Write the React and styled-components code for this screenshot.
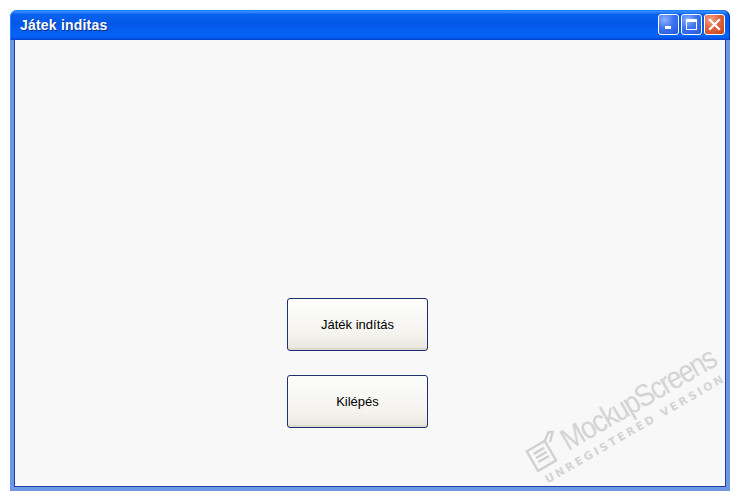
import React from "react";
import styled, { createGlobalStyle } from "styled-components";

const GlobalStyle = createGlobalStyle`
  html, body {
    margin: 0;
    padding: 0;
    background: #ffffff;
  }
  body {
    font-family: Tahoma, "Liberation Sans", sans-serif;
  }
`;

const Page = styled.div`
  width: 740px;
  height: 500px;
  padding: 10px 0 0 10px;
  box-sizing: border-box;
`;

const Window = styled.div`
  width: 720px;
  height: 481px;
  display: flex;
  flex-direction: column;
`;

const TitleBar = styled.div`
  height: 30px;
  flex: none;
  display: flex;
  align-items: center;
  padding: 0 5px 0 10px;
  border-radius: 7px 7px 0 0;
  background: linear-gradient(
    #0a7bff 0%,
    #3a8cff 6%,
    #0861ee 14%,
    #0458e8 45%,
    #0664f5 85%,
    #0557ec 94%,
    #003cc8 100%
  );
  box-shadow: inset 1px 0 0 #2f7cff, inset -1px 0 0 #0033b8;
`;

const Title = styled.div`
  flex: 1;
  color: #ffffff;
  font: bold 14px "Liberation Sans", "DejaVu Sans", sans-serif;
  letter-spacing: 0.2px;
  text-shadow: 1px 1px 0 #0b2f8a;
  margin-top: -1px;
`;

const Controls = styled.div`
  display: flex;
  gap: 2px;
  margin-top: -2px;
`;

const Ctl = styled.div`
  width: 21px;
  height: 21px;
  box-sizing: border-box;
  border: 1px solid #ffffff;
  border-radius: 3px;
  display: flex;
  align-items: center;
  justify-content: center;
  background: ${(p) =>
    p.$close
      ? "radial-gradient(circle at 30% 25%, #f0a288 0%, #e2653f 45%, #c4401c 100%)"
      : "radial-gradient(circle at 30% 25%, #8fb2ff 0%, #3d74f0 45%, #2257d8 100%)"};
`;

const Body = styled.div`
  flex: 1;
  position: relative;
  overflow: hidden;
  display: flex;
  background: #f8f8f8;
  border-style: solid;
  border-color: #6f98e4;
  border-width: 0 4px 4px 4px;
  box-shadow: inset 1px 0 0 #1f3fa6, inset -1px 0 0 #1f3fa6, inset 0 -1px 0 #1f3fa6;
`;

const Menu = styled.div`
  display: flex;
  flex-direction: column;
  gap: 24px;
  padding: 258px 0 0 273px;
`;

const Button = styled.button`
  width: 141px;
  height: 53px;
  border: 1px solid #1e2f72;
  border-radius: 3px;
  background: linear-gradient(#fdfdfb 0%, #f4f3ee 70%, #e8e6dd 100%);
  box-shadow: inset 0 -2px 0 #dcd9cf;
  font: 13px "Liberation Sans", Arial, sans-serif;
  color: #000000;
  padding: 0;
  cursor: pointer;
`;

const Watermark = styled.div`
  position: absolute;
  left: 503px;
  top: 338px;
  width: 218px;
  height: 70px;
  transform: rotate(-30deg);
  transform-origin: center;
  display: grid;
  grid-template-columns: 40px auto;
  align-items: end;
  align-content: center;
  white-space: nowrap;
  pointer-events: none;
`;

const Brand = styled.div`
  font: 27px "Liberation Sans", sans-serif;
  letter-spacing: -1.6px;
  line-height: 28px;
  color: #d4d4d4;
  transform: scaleY(1.15);
  transform-origin: bottom left;
`;

const Unreg = styled.div`
  grid-column: 1 / 3;
  font: bold 11px "DejaVu Sans", "Liberation Sans", sans-serif;
  letter-spacing: 2.6px;
  color: #d4d4d4;
  margin-top: 2px;
  padding-left: 6px;
`;

const MinIcon = () => (
  <svg width="11" height="11" viewBox="0 0 11 11">
    <rect x="2" y="7" width="6" height="3" fill="#ffffff" />
  </svg>
);

const MaxIcon = () => (
  <svg width="13" height="13" viewBox="0 0 13 13">
    <rect x="1.5" y="1.5" width="10" height="10" fill="none" stroke="#ffffff" strokeWidth="1" />
    <rect x="1" y="1" width="11" height="3" fill="#ffffff" />
  </svg>
);

const CloseIcon = () => (
  <svg width="13" height="13" viewBox="0 0 13 13">
    <path d="M2 2 L11 11 M11 2 L2 11" stroke="#ffffff" strokeWidth="2.2" strokeLinecap="square" />
  </svg>
);

const LogoIcon = () => (
  <svg width="38" height="34" viewBox="0 0 40 36">
    <g fill="none" stroke="#d0d0d0" strokeWidth="2.5">
      <path d="M4 8 L26 8 L26 32 L4 32 Z" />
      <path d="M9 14 L22 14 M9 19 L22 19 M9 24 L22 24" />
      <path d="M26 8 L34 2 L38 4 L30 12" />
    </g>
  </svg>
);

export default function App() {
  return (
    <>
      <GlobalStyle />
      <Page>
        <Window>
          <TitleBar>
            <Title>Játek inditas</Title>
            <Controls>
              <Ctl><MinIcon /></Ctl>
              <Ctl><MaxIcon /></Ctl>
              <Ctl $close><CloseIcon /></Ctl>
            </Controls>
          </TitleBar>
          <Body>
            <Menu>
              <Button>Játék indítás</Button>
              <Button>Kilépés</Button>
            </Menu>
            <Watermark>
              <LogoIcon />
              <Brand>MockupScreens</Brand>
              <Unreg>UNREGISTERED VERSION</Unreg>
            </Watermark>
          </Body>
        </Window>
      </Page>
    </>
  );
}
